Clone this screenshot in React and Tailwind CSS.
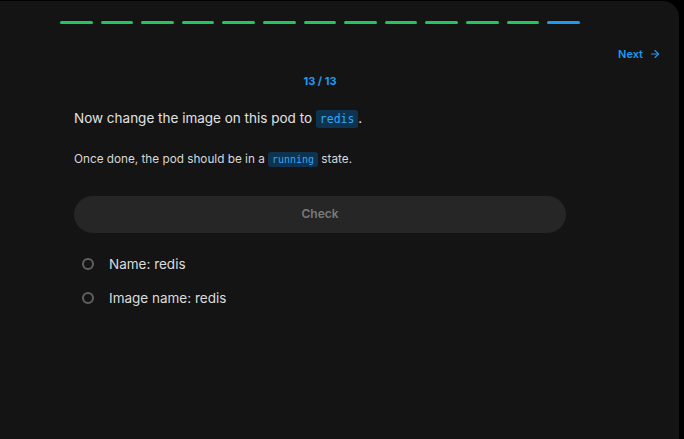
import { ArrowRight } from "lucide-react";

const steps = Array.from({ length: 13 }, (_, i) => i);

const checks = ["Name: redis", "Image name: redis"];

function Code({ children }) {
  return (
    <code className="rounded-[3px] bg-[#0e3350] px-1 py-[2px] font-['DejaVu_Sans_Mono',monospace] text-[0.85em] text-[#35a5f0]">
      {children}
    </code>
  );
}

export default function App() {
  return (
    <div className="h-[439px] w-[684px] overflow-hidden bg-black pt-px font-['Inter',sans-serif]">
      <div className="h-[438px] w-[679px] rounded-tr-2xl bg-[#141414]">
        {/* progress */}
        <div className="ml-[60px] flex w-[520px] gap-2 pt-[20px]">
          {steps.map((i) => (
            <div
              key={i}
              className={
                i === 12
                  ? "h-[3px] flex-1 rounded-full bg-[#1d9bf0]"
                  : "h-[3px] flex-1 rounded-full bg-[#22c55e]"
              }
            />
          ))}
        </div>

        <div className="mt-[22px] flex justify-end pr-[18px]">
          <button className="flex items-center gap-[6px] text-[11px] font-semibold text-[#1d9bf0]">
            Next <ArrowRight size={12} strokeWidth={2.25} />
          </button>
        </div>

        <div className="ml-[60px] w-[520px]">
          <div className="mt-[10px] text-center text-[11px] font-bold text-[#1d9bf0]">
            13 / 13
          </div>

          <div className="px-[14px]">
            <p className="mt-[19px] text-[13.5px] text-[#e2e2e2]">
              Now change the image on this pod to <Code>redis</Code>.
            </p>

            <p className="mt-[23px] text-[11.75px] text-[#d8d8d8]">
              Once done, the pod should be in a <Code>running</Code> state.
            </p>

            <button className="mt-[27px] flex h-[37px] w-full items-center justify-center rounded-full bg-[#262626] text-[12px] font-semibold text-[#7a7a7a]">
              Check
            </button>

            <div className="mt-[21px] flex flex-col gap-[14px] pl-[8px]">
              {checks.map((c) => (
                <div key={c} className="flex items-center gap-[15px]">
                  <span className="h-[12px] w-[12px] rounded-full border-2 border-[#606060]" />
                  <span className="text-[13.5px] text-[#dcdcdc]">{c}</span>
                </div>
              ))}
            </div>
          </div>
        </div>
      </div>
    </div>
  );
}
